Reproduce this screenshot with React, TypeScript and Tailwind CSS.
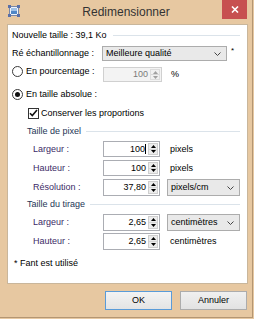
import React from "react";

const Up = ({ c = "#000" }: { c?: string }) => (
  <svg width="5" height="3" viewBox="0 0 5 3">
    <path d="M2.5 0L5 3H0z" fill={c} />
  </svg>
);
const Down = ({ c = "#000" }: { c?: string }) => (
  <svg width="5" height="3" viewBox="0 0 5 3">
    <path d="M0 0H5L2.5 3z" fill={c} />
  </svg>
);
const Chevron = () => (
  <svg width="7" height="4" viewBox="0 0 7 4">
    <path d="M0.5 0.5L3.5 3.5L6.5 0.5" fill="none" stroke="#444" strokeWidth="1" />
  </svg>
);

function Spin({
  value,
  wide = false,
  disabled = false,
  caret = false,
}: {
  value: string;
  wide?: boolean;
  disabled?: boolean;
  caret?: boolean;
}) {
  return (
    <div
      className={`flex h-full items-stretch border ${wide ? "w-[59px]" : "w-[57px]"} ${
        disabled ? "border-[#d0d0d0] bg-[#f3f3f3] text-[#7a7a7a]" : "border-[#abadb3] bg-white text-black"
      }`}
    >
      <div className="flex flex-1 items-center justify-end pr-[2px]">
        <span>{value}</span>
        {caret && <span className="ml-[0px] h-[10px] w-px bg-black" />}
      </div>
      <div
        className={`my-[1px] mr-[1px] flex w-[10px] flex-col border ${
          disabled ? "border-[#dcdcdc] bg-[#f0f0f0]" : "border-[#cfcfcf] bg-[#ececec]"
        }`}
      >
        <div className="flex flex-1 items-center justify-center border-b border-[#d6d6d6]">
          <Up c={disabled ? "#a0a0a0" : "#000"} />
        </div>
        <div className="flex flex-1 items-center justify-center">
          <Down c={disabled ? "#a0a0a0" : "#000"} />
        </div>
      </div>
    </div>
  );
}

function Select({ text, w }: { text: string; w: "main" | "small" }) {
  return (
    <div
      className={`flex h-full items-center justify-between border border-[#acacac] bg-[#e9e9e9] pl-[3px] pr-[5px] text-black ${
        w === "main" ? "w-[125px]" : "w-[73px]"
      }`}
    >
      <span>{text}</span>
      <Chevron />
    </div>
  );
}

const Radio = ({ checked = false }: { checked?: boolean }) => (
  <span className="flex h-[11px] w-[11px] shrink-0 items-center justify-center rounded-full border border-[#3a3a3a] bg-white">
    {checked && <span className="h-[5px] w-[5px] rounded-full bg-[#111]" />}
  </span>
);

const Check = () => (
  <span className="flex h-[11px] w-[11px] shrink-0 items-center justify-center border border-[#333] bg-white">
    <svg width="9" height="8" viewBox="0 0 9 8">
      <path d="M1 4.2L3.3 6.5L8 1" fill="none" stroke="#111" strokeWidth="1.6" />
    </svg>
  </span>
);

const AppIcon = () => (
  <svg width="12" height="12" viewBox="0 0 12 12">
    <rect x="1.5" y="1.5" width="9" height="9" fill="#eef3fa" stroke="#7a88a6" />
    <rect x="3" y="3" width="6" height="3" fill="#9fc0e6" />
    <rect x="3" y="6" width="6" height="3" fill="#4f86c6" />
    <rect x="0" y="0" width="3" height="3" fill="#5a70a8" />
    <rect x="9" y="0" width="3" height="3" fill="#5a70a8" />
    <rect x="0" y="9" width="3" height="3" fill="#5a70a8" />
    <rect x="9" y="9" width="3" height="3" fill="#5a70a8" />
  </svg>
);

export default function App() {
  const label = "text-[#3b2a66]";
  return (
    <div className="h-[319px] w-[254px] bg-[#e7c8a1] font-['Liberation_Sans',Arial,sans-serif] text-[9px] leading-[11px] text-black">
      <div className="flex h-[318px] w-[253px] flex-col border-b border-r border-[#b49673] bg-[#e7c8a1]">
        {/* Title bar */}
        <div className="grid h-[24px] grid-cols-[1fr_auto_1fr]">
          <div className="flex items-start pl-[8px] pt-[5px]">
            <AppIcon />
          </div>
          <div className="pt-[5px] text-[12px] leading-[14px] text-[#333]">Redimensionner</div>
          <div className="flex items-start justify-end pr-[5px]">
            <div className="flex h-[19px] w-[25px] items-center justify-center bg-[#c75050]">
              <svg width="8" height="7" viewBox="0 0 8 7">
                <path d="M1 0.5L7 6.5M7 0.5L1 6.5" stroke="#fff" strokeWidth="1.6" />
              </svg>
            </div>
          </div>
        </div>

        {/* Client panel */}
        <div className="ml-[7px] flex h-[260px] w-[241px] flex-col border border-[#c9b69b] bg-white">
          {/* Nouvelle taille */}
          <div className="mt-[2px] flex h-[16px] items-center pl-[4px] pr-[7px]">
            <span>Nouvelle taille : 39,1 Ko</span>
            <span className="ml-[6px] h-px flex-1 bg-[#dbe3ea]" />
          </div>

          {/* Ré échantillonnage */}
          <div className="mt-[3px] flex h-[15px] items-center pl-[4px]">
            <span className="w-[90px]">Ré échantillonnage :</span>
            <Select text="Meilleure qualité" w="main" />
            <span className="ml-[4px] self-start pt-[1px] text-[8px] leading-[8px]">*</span>
          </div>

          {/* En pourcentage */}
          <div className="mt-[6px] flex h-[15px] items-center pl-[4px]">
            <div className="-mt-[6px] flex h-[11px] w-[91px] items-center gap-[3px]">
              <Radio />
              <span>En pourcentage :</span>
            </div>
            <Spin value="100" wide disabled />
            <span className="ml-[9px]">%</span>
          </div>

          {/* En taille absolue */}
          <div className="mt-[5px] flex h-[14px] items-center gap-[3px] pl-[4px]">
            <Radio checked />
            <span>En taille absolue :</span>
          </div>

          {/* Conserver */}
          <div className="mt-[5px] flex h-[14px] items-center gap-[2px] pl-[20px]">
            <Check />
            <span>Conserver les proportions</span>
          </div>

          {/* Taille de pixel */}
          <div className="mt-[5px] flex h-[12px] items-center pl-[19px] pr-[7px]">
            <span className="text-[#1e3656]">Taille de pixel</span>
            <span className="ml-[5px] h-px flex-1 bg-[#dbe3ea]" />
          </div>

          <div className="mt-[4px] flex h-[16px] items-center pl-[25px]">
            <span className={`w-[70px] ${label}`}>Largeur :</span>
            <Spin value="100" caret />
            <span className="ml-[10px]">pixels</span>
          </div>

          <div className="mt-[3px] flex h-[16px] items-center pl-[25px]">
            <span className={`w-[70px] ${label}`}>Hauteur :</span>
            <Spin value="100" />
            <span className="ml-[10px]">pixels</span>
          </div>

          <div className="mt-[3px] flex h-[17px] items-center pl-[25px]">
            <span className={`w-[70px] ${label}`}>Résolution :</span>
            <Spin value="37,80" />
            <div className="ml-[7px] h-full">
              <Select text="pixels/cm" w="small" />
            </div>
          </div>

          {/* Taille du tirage */}
          <div className="mt-[2px] flex h-[12px] items-center pl-[19px] pr-[7px]">
            <span className="text-[#1e3656]">Taille du tirage</span>
            <span className="ml-[5px] h-px flex-1 bg-[#dbe3ea]" />
          </div>

          <div className="mt-[4px] flex h-[17px] items-center pl-[25px]">
            <span className={`w-[70px] ${label}`}>Largeur :</span>
            <Spin value="2,65" />
            <div className="ml-[7px] h-full">
              <Select text="centimètres" w="small" />
            </div>
          </div>

          <div className="mt-[2px] flex h-[17px] items-center pl-[25px]">
            <span className={`w-[70px] ${label}`}>Hauteur :</span>
            <Spin value="2,65" />
            <span className="ml-[10px]">centimètres</span>
          </div>

          <div className="mt-[7px] flex h-[12px] items-center pl-[6px]">
            <span>* Fant est utilisé</span>
          </div>
        </div>

        {/* Buttons */}
        <div className="mt-[7px] flex h-[19px] justify-end gap-[8px] pr-[5px]">
          <button className="flex w-[67px] items-center justify-center border border-[#5a9bd8] bg-gradient-to-b from-[#f3f3f3] to-[#e4e4e4] text-[9px]">
            OK
          </button>
          <button className="flex w-[67px] items-center justify-center border border-[#acacac] bg-gradient-to-b from-[#f0f0f0] to-[#e2e2e2] text-[9px]">
            Annuler
          </button>
        </div>
      </div>
    </div>
  );
}
